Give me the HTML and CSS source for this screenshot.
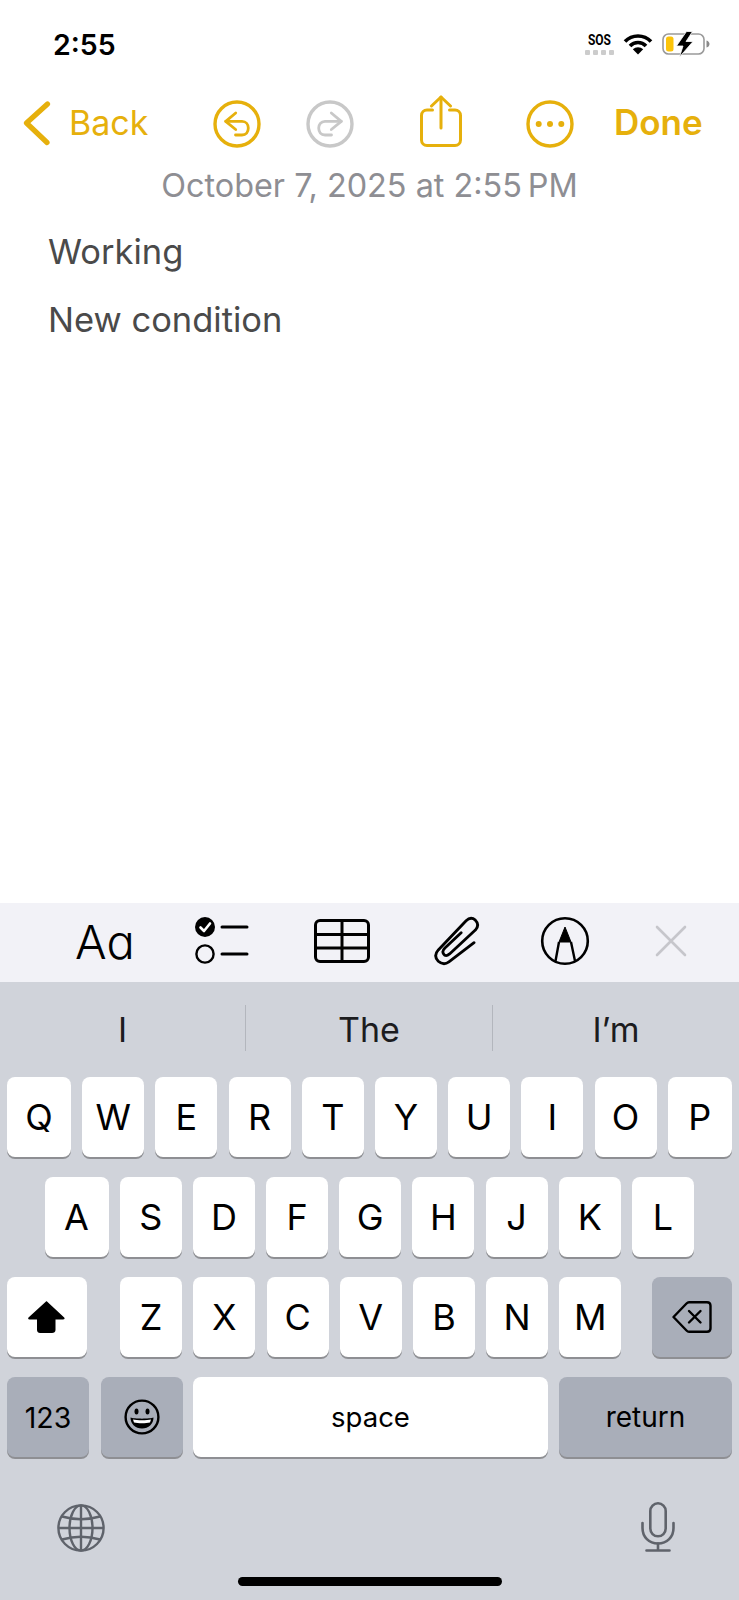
FILE: index.html
```html
<!DOCTYPE html>
<html lang="en">
<head>
  <meta charset="UTF-8" />
  <meta name="viewport" content="width=device-width, initial-scale=1.0"/>
  <title>Notes</title>
  <link rel="stylesheet" href="styles.css">
</head>
<body>
  <div class="phone">
    <!-- Status bar -->
    <div class="status-bar">
      <span class="clock">2:55</span>
      <div class="sos">
        <span class="sos-text">SOS</span>
        <div class="sos-dots"><i></i><i></i><i></i><i></i></div>
      </div>
      <svg class="wifi" width="30" height="22" viewBox="0 0 30 22">
        <path d="M2 8.5 A18 18 0 0 1 28 8.5" fill="none" stroke="#000" stroke-width="3.6"/>
        <path d="M7 13 A11 11 0 0 1 23 13" fill="none" stroke="#000" stroke-width="3.6"/>
        <path d="M15 21.5 L9.8 16.3 A7.4 7.4 0 0 1 20.2 16.3 Z" fill="#000"/>
      </svg>
      <svg class="battery" width="48" height="26" viewBox="0 0 48 26">
        <rect x="1" y="3" width="41" height="20" rx="5.5" fill="none" stroke="#9a9a9a" stroke-width="1.6"/>
        <rect x="4" y="5.5" width="7.5" height="15" rx="2.5" fill="#fcc40a"/>
        <path d="M44.5 9.5 C46.5 10 47.5 11.5 47.5 13 C47.5 14.5 46.5 16 44.5 16.5 Z" fill="#8a8a8a"/>
        <path d="M24.5 0.5 L14.5 15 H21 L17.5 26 L31 10.5 H24 L30.5 0.5 Z" fill="#000" stroke="#fff" stroke-width="0.8"/>
      </svg>
    </div>

    <!-- Nav icons -->
    <div class="nav">
      <svg class="back-icon" width="30" height="46" viewBox="0 0 30 46">
        <path d="M24.5 4 L3.5 23 L24 42.5" fill="none" stroke="#e6b00c" stroke-width="5.2" stroke-linecap="round" stroke-linejoin="round"/>
      </svg>
      <span class="back-label">Back</span>
      <svg class="nav-icon undo" width="48" height="48" viewBox="0 0 48 48" fill="none" stroke="#e6b00c" stroke-width="3.4" stroke-linecap="round" stroke-linejoin="round">
        <circle cx="24" cy="24" r="22"/>
        <path d="M22.7 13 L12.7 21.3 L22.7 29.5" stroke-width="2.8"/>
        <path d="M12.7 21.3 H29 C33 21.3 35.3 24.5 35.3 28 C35.3 32 33 35 29 35 H22.5" stroke-width="2.8"/>
      </svg>
      <svg class="nav-icon redo" width="48" height="48" viewBox="0 0 48 48" fill="none" stroke="#c8c8c8" stroke-width="3.4" stroke-linecap="round" stroke-linejoin="round">
        <circle cx="24" cy="24" r="22"/>
        <path d="M25.3 13 L35.3 21.3 L25.3 29.5" stroke-width="2.8"/>
        <path d="M35.3 21.3 H19 C15 21.3 12.7 24.5 12.7 28 C12.7 32 15 35 19 35 H25.5" stroke-width="2.8"/>
      </svg>
      <svg class="nav-icon share" width="42" height="52" viewBox="0 0 42 52" fill="none" stroke="#e6b00c" stroke-width="3" stroke-linecap="round" stroke-linejoin="round">
        <path d="M12.5 15 H7 A5.5 5.5 0 0 0 1.5 20.5 V45 A5.5 5.5 0 0 0 7 50.5 H35 A5.5 5.5 0 0 0 40.5 45 V20.5 A5.5 5.5 0 0 0 35 15 H29.5"/>
        <path d="M21 33 V2"/>
        <path d="M11.5 11 L21 2 L30.5 11"/>
      </svg>
      <svg class="nav-icon more" width="48" height="48" viewBox="0 0 48 48">
        <circle cx="24" cy="24" r="22" fill="none" stroke="#e6b00c" stroke-width="3.4"/>
        <circle cx="12.7" cy="24" r="3" fill="#e6b00c"/>
        <circle cx="24" cy="24" r="3" fill="#e6b00c"/>
        <circle cx="35.3" cy="24" r="3" fill="#e6b00c"/>
      </svg>
      <span class="done">Done</span>
    </div>

    <div class="note-date">October 7, 2025 at 2:55&#8201;PM</div>

    <div class="note-body">
      <p>Working</p>
      <p>New condition</p>
    </div>

    <!-- Formatting bar above keyboard -->
    <div class="format-bar">
      <span class="fmt-text">Aa</span>
      <svg class="fmt-list" width="54" height="50" viewBox="0 0 54 50">
        <circle cx="10" cy="11" r="10" fill="#000"/>
        <path d="M5.5 11.5 L9 15 L15 7.5" fill="none" stroke="#fff" stroke-width="2.6" stroke-linecap="round" stroke-linejoin="round"/>
        <circle cx="10" cy="38" r="8.6" fill="none" stroke="#000" stroke-width="2.4"/>
        <path d="M27 11 H52 M27 38 H52" stroke="#000" stroke-width="3" stroke-linecap="round"/>
      </svg>
      <svg class="fmt-table" width="56" height="44" viewBox="0 0 56 44" fill="none" stroke="#000" stroke-width="3">
        <rect x="1.5" y="1.5" width="53" height="41" rx="4.5"/>
        <path d="M1.5 15.5 H54.5 M1.5 29 H54.5 M28 1.5 V42.5"/>
      </svg>
      <svg class="fmt-clip" width="48" height="54" viewBox="190 70 145 162" fill="none" stroke="#000" stroke-width="8.5" stroke-linecap="round" stroke-linejoin="round">
        <path d="M314 156 L238 214 Q222 226 206 212 Q190 196 206 178 L290 90 Q304 76 318 88 Q332 102 318 118 L240 190 Q228 200 222 190 Q216 182 226 172 L275 126"/>
      </svg>
      <svg class="fmt-markup" width="50" height="50" viewBox="0 0 50 50" fill="none" stroke="#000">
        <circle cx="25" cy="25" r="22.8" stroke-width="2.6"/>
        <path d="M25 11 L31 26 H19 Z" fill="#000" stroke-width="1"/>
        <path d="M19 26 L15.5 45 M31 26 L35 45" stroke-width="2.4"/>
      </svg>
      <svg class="fmt-close" width="32" height="32" viewBox="0 0 32 32">
        <path d="M2 2 L30 30 M30 2 L2 30" stroke="#c6c6cb" stroke-width="2.6" stroke-linecap="round"/>
      </svg>
    </div>

    <!-- Keyboard -->
    <div class="keyboard">
      <div class="suggestions">
        <span class="word">I</span>
        <span class="word divided">The</span>
        <span class="word divided">I’m</span>
      </div>
      <div class="key-rows">
        <div class="key-row">
          <div class="key wide">Q</div><div class="key">W</div><div class="key">E</div><div class="key">R</div><div class="key">T</div><div class="key">Y</div><div class="key">U</div><div class="key">I</div><div class="key">O</div><div class="key wide">P</div>
        </div>
        <div class="key-row inset">
          <div class="key wide">A</div><div class="key">S</div><div class="key">D</div><div class="key">F</div><div class="key">G</div><div class="key">H</div><div class="key">J</div><div class="key">K</div><div class="key">L</div>
        </div>
        <div class="key-row">
          <div class="key shift-key">
            <svg width="40" height="34" viewBox="0 0 40 34">
              <path d="M19 1.5 L1.5 17.5 C0.8 18.6 1.2 19.5 2.5 19.5 H10 V30 C10 32 11.5 33 13 33 H25 C27 33 28.5 32 28.5 30 V19.5 H36 C37.5 19.5 38 18.6 37.2 17.5 L20 1.5 C19.6 1.2 19.4 1.2 19 1.5 Z" fill="#000"/>
            </svg>
          </div>
          <div class="letter-group">
            <div class="key">Z</div><div class="key">X</div><div class="key">C</div><div class="key">V</div><div class="key">B</div><div class="key">N</div><div class="key">M</div>
          </div>
          <div class="key dark delete-key">
            <svg width="40" height="32" viewBox="0 0 40 32" fill="none" stroke="#000" stroke-linecap="round" stroke-linejoin="round">
              <path d="M1.5 16 L14.5 2.5 C15.3 1.7 16 1.3 17 1.3 H35 C37 1.3 38.5 2.8 38.5 4.8 V27.2 C38.5 29.2 37 30.7 35 30.7 H17 C16 30.7 15.3 30.3 14.5 29.5 Z" stroke-width="2.4"/>
              <path d="M17 10 L28.5 21.5 M28.5 10 L17 21.5" stroke-width="2.4"/>
            </svg>
          </div>
        </div>
        <div class="key-row bottom-row">
          <div class="key dark num-key">123</div>
          <div class="key dark emoji-key">
            <svg width="36" height="36" viewBox="0 0 36 36">
              <circle cx="18" cy="18" r="16.4" fill="none" stroke="#000" stroke-width="2.4"/>
              <ellipse cx="12.5" cy="12.5" rx="2" ry="3" fill="#000"/>
              <ellipse cx="23.5" cy="12.5" rx="2" ry="3" fill="#000"/>
              <path d="M6.5 18.5 C10 20 26 20 29.5 18.5 C29.5 25 24.5 29.5 18 29.5 C11.5 29.5 6.5 25 6.5 18.5 Z" fill="#000"/>
              <path d="M9 20.5 C13 21.5 23 21.5 27 20.5 L26 23.5 C22 24.5 14 24.5 10 23.5 Z" fill="#fff"/>
            </svg>
          </div>
          <div class="key space-key">space</div>
          <div class="key dark return-key">return</div>
        </div>
      </div>
      <div class="kb-bottom">
        <svg class="globe" width="48" height="48" viewBox="0 0 48 48" fill="none" stroke="#5f636b" stroke-width="2.4">
          <circle cx="24" cy="24" r="22.6"/>
          <ellipse cx="24" cy="24" rx="11.5" ry="22.6"/>
          <path d="M24 1.4 V46.6 M1.4 24 H46.6"/>
          <path d="M5 12.5 Q24 18 43 12.5 M5 35.5 Q24 30 43 35.5"/>
        </svg>
        <svg class="mic" width="34" height="50" viewBox="0 0 34 50" fill="none" stroke="#5f636b" stroke-width="2.6" stroke-linecap="round">
          <rect x="9.3" y="1.3" width="15.4" height="33" rx="7.7"/>
          <path d="M1.5 21 V26 C1.5 35 8 41.5 17 41.5 C26 41.5 32.5 35 32.5 26 V21"/>
          <path d="M17 41.5 V48.5 M5.5 48.5 H28.5"/>
        </svg>
      </div>
      <div class="home-bar"></div>
    </div>
  </div>
</body>
</html>
```

FILE: styles.css
```css
body {
  margin: 0;
  padding: 0;
  background: #fff;
  font-family: Inter, "Open Sans", sans-serif;
  color: #000;
}

.phone {
  width: 739px;
  height: 1600px;
  display: flex;
  flex-direction: column;
  overflow: hidden;
}

/* Status bar */
.status-bar {
  height: 88px;
  display: flex;
  align-items: center;
  padding-left: 53px;
  box-sizing: border-box;
}

.clock {
  font-size: 28.5px;
  font-weight: 600;
  margin-right: auto;
}

.sos {
  display: flex;
  flex-direction: column;
  align-items: center;
  width: 30px;
  margin-right: 9px;
}

.sos-text {
  font-family: Roboto, sans-serif;
  font-size: 15px;
  font-weight: 700;
  line-height: 15px;
  transform: scaleX(0.8);
}

.sos-dots {
  display: flex;
  gap: 3px;
  margin-top: 2px;
}

.sos-dots i {
  width: 5px;
  height: 5px;
  border-radius: 1px;
  background: #ccc;
}

.wifi {
  margin-right: 9px;
}

.battery {
  margin-right: 29px;
}

/* Nav */
.nav {
  height: 70px;
  display: flex;
  align-items: center;
  padding-left: 23px;
  color: #e6b00c;
}

.back-icon {
  margin-right: 16px;
}

.back-label {
  font-size: 34px;
  width: 79px;
  margin-top: -2px;
}

.undo {
  margin-left: 65px;
  margin-top: 2px;
}

.redo {
  margin-left: 45px;
  margin-top: 2px;
}

.share {
  margin-left: 66px;
  margin-top: -4px;
}

.more {
  margin-left: 64px;
  margin-top: 1px;
}

.done {
  margin-left: 40px;
  font-size: 35px;
  font-weight: 600;
  margin-top: -2px;
}

.note-date {
  text-align: center;
  font-size: 32.4px;
  line-height: 40px;
  color: #8e8e93;
  margin-top: 8px;
}

.note-body {
  padding: 23px 0 0 48px;
  color: #4a4a4a;
  font-size: 34.5px;
  line-height: 46px;
}

.note-body p {
  margin: 0 0 22px;
}

/* Formatting bar */
.format-bar {
  margin-top: auto;
  height: 79px;
  padding-bottom: 3px;
  box-sizing: border-box;
  background: #f2f2f7;
  display: flex;
  align-items: center;
}

.fmt-text {
  font-size: 47px;
  font-weight: 300;
  font-feature-settings: "cv11";
  margin-left: 75px;
  width: 60px;
}

.fmt-list {
  margin-left: 60px;
}

.fmt-table {
  margin-left: 65px;
}

.fmt-clip {
  margin-left: 63px;
}

.fmt-markup {
  margin-left: 59px;
}

.fmt-close {
  margin-left: 65px;
}

/* Keyboard */
.keyboard {
  background: #d0d3da;
  height: 618px;
  display: flex;
  flex-direction: column;
}

.suggestions {
  height: 95px;
  display: grid;
  grid-template-columns: 245px 247px 247px;
  align-items: center;
}

.word {
  font-size: 34px;
  text-align: center;
  color: #1c1c1e;
  line-height: 50px;
  height: 46px;
  margin-top: -4px;
}

.word.divided {
  border-left: 1px solid #b3b6bd;
}

.key-rows {
  display: flex;
  flex-direction: column;
  gap: 20px;
}

.key-row {
  display: flex;
  gap: 11.2px;
  padding: 0 7px;
}

.key-row.inset {
  padding: 0 44.5px;
}

.key {
  flex: 0 0 62px;
  height: 80px;
  background: #fff;
  border-radius: 8px;
  box-shadow: 0 2px 0 #8e8f93;
  display: flex;
  align-items: center;
  justify-content: center;
  font-size: 36px;
  color: #000;
}

.key.wide {
  flex-basis: 64px;
}

.key.dark {
  background: #a9aeb9;
}

.shift-key,
.delete-key {
  flex: 0 0 80px;
}

.letter-group {
  display: flex;
  gap: 11.2px;
  padding-left: 22px;
}

.delete-key {
  margin-left: auto;
}

.bottom-row {
  gap: 0;
}

.num-key {
  flex: 0 0 82px;
  margin-right: 12px;
  font-size: 28.5px;
}

.emoji-key {
  flex: 0 0 82px;
  margin-right: 10px;
}

.space-key {
  flex: 0 0 355px;
  margin-right: 11px;
  font-size: 27.5px;
}

.return-key {
  flex: 0 0 173px;
  font-size: 28px;
}

.kb-bottom {
  display: flex;
  justify-content: space-between;
  align-items: flex-start;
  padding: 45px 64px 0 57px;
}

.globe {
  margin-top: 2px;
}

.home-bar {
  width: 264px;
  height: 9px;
  border-radius: 5px;
  background: #000;
  margin: 25px auto 0;
}
```
